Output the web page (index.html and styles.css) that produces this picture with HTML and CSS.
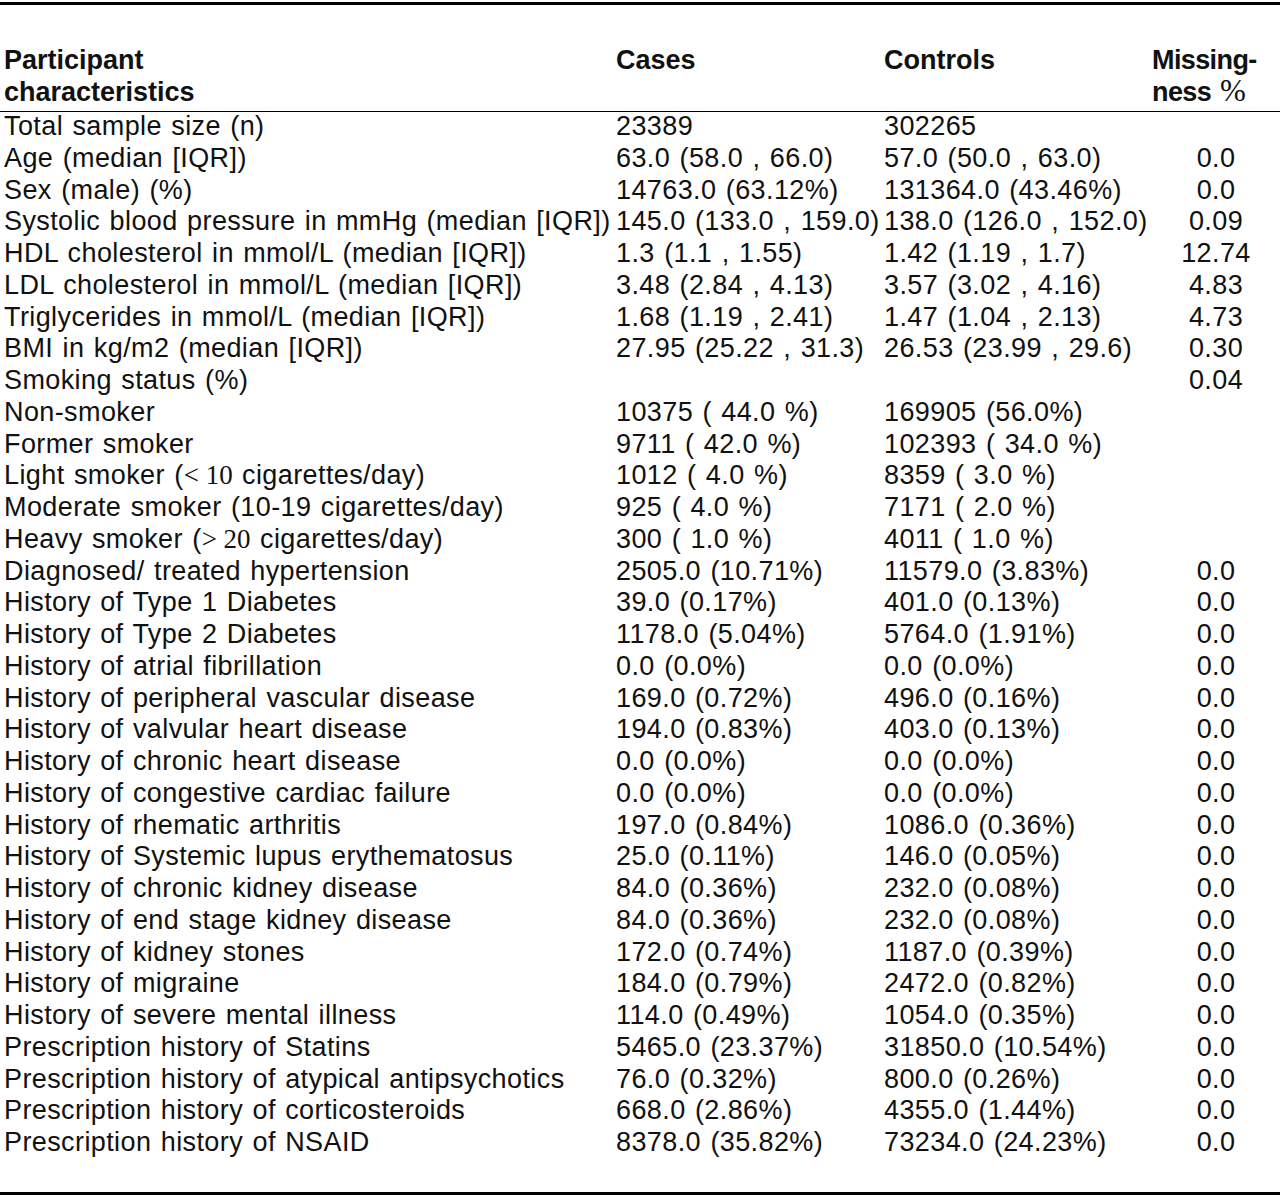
FILE: index.html
```html
<!DOCTYPE html>
<html lang="en">
<head>
<meta charset="utf-8">
<title>Participant characteristics</title>
<link rel="stylesheet" href="styles.css">
</head>
<body>
<div class="table-wrap">
<table class="tbl">
<colgroup>
<col class="c1"><col class="c2"><col class="c3"><col class="c4">
</colgroup>
<thead>
<tr>
<th class="lbl">Participant<br>characteristics</th>
<th>Cases</th>
<th>Controls</th>
<th class="misshead">Missing-<br>ness <span class="m pct">%</span></th>
</tr>
</thead>
<tbody>
<tr><td class="lbl">Total sample size (n)</td><td>23389</td><td>302265</td><td class="miss"></td></tr>
<tr><td class="lbl">Age (median [IQR])</td><td>63.0 (58.0 , 66.0)</td><td>57.0 (50.0 , 63.0)</td><td class="miss">0.0</td></tr>
<tr><td class="lbl">Sex (male) (%)</td><td>14763.0 (63.12%)</td><td>131364.0 (43.46%)</td><td class="miss">0.0</td></tr>
<tr><td class="lbl">Systolic blood pressure in mmHg (median [IQR])</td><td>145.0 (133.0 , 159.0)</td><td>138.0 (126.0 , 152.0)</td><td class="miss">0.09</td></tr>
<tr><td class="lbl">HDL cholesterol in mmol/L (median [IQR])</td><td>1.3 (1.1 , 1.55)</td><td>1.42 (1.19 , 1.7)</td><td class="miss">12.74</td></tr>
<tr><td class="lbl">LDL cholesterol in mmol/L (median [IQR])</td><td>3.48 (2.84 , 4.13)</td><td>3.57 (3.02 , 4.16)</td><td class="miss">4.83</td></tr>
<tr><td class="lbl">Triglycerides in mmol/L (median [IQR])</td><td>1.68 (1.19 , 2.41)</td><td>1.47 (1.04 , 2.13)</td><td class="miss">4.73</td></tr>
<tr><td class="lbl">BMI in kg/m2 (median [IQR])</td><td>27.95 (25.22 , 31.3)</td><td>26.53 (23.99 , 29.6)</td><td class="miss">0.30</td></tr>
<tr><td class="lbl">Smoking status (%)</td><td></td><td></td><td class="miss">0.04</td></tr>
<tr><td class="lbl">Non-smoker</td><td>10375 ( 44.0 %)</td><td>169905 (56.0%)</td><td class="miss"></td></tr>
<tr><td class="lbl">Former smoker</td><td>9711 ( 42.0 %)</td><td>102393 ( 34.0 %)</td><td class="miss"></td></tr>
<tr><td class="lbl">Light smoker (<span class="m">&lt;&nbsp;10</span> cigarettes/day)</td><td>1012 ( 4.0 %)</td><td>8359 ( 3.0 %)</td><td class="miss"></td></tr>
<tr><td class="lbl">Moderate smoker (10-19 cigarettes/day)</td><td>925 ( 4.0 %)</td><td>7171 ( 2.0 %)</td><td class="miss"></td></tr>
<tr><td class="lbl">Heavy smoker (<span class="m">&gt;&nbsp;20</span> cigarettes/day)</td><td>300 ( 1.0 %)</td><td>4011 ( 1.0 %)</td><td class="miss"></td></tr>
<tr><td class="lbl">Diagnosed/ treated hypertension</td><td>2505.0 (10.71%)</td><td>11579.0 (3.83%)</td><td class="miss">0.0</td></tr>
<tr><td class="lbl">History of Type 1 Diabetes</td><td>39.0 (0.17%)</td><td>401.0 (0.13%)</td><td class="miss">0.0</td></tr>
<tr><td class="lbl">History of Type 2 Diabetes</td><td>1178.0 (5.04%)</td><td>5764.0 (1.91%)</td><td class="miss">0.0</td></tr>
<tr><td class="lbl">History of atrial fibrillation</td><td>0.0 (0.0%)</td><td>0.0 (0.0%)</td><td class="miss">0.0</td></tr>
<tr><td class="lbl">History of peripheral vascular disease</td><td>169.0 (0.72%)</td><td>496.0 (0.16%)</td><td class="miss">0.0</td></tr>
<tr><td class="lbl">History of valvular heart disease</td><td>194.0 (0.83%)</td><td>403.0 (0.13%)</td><td class="miss">0.0</td></tr>
<tr><td class="lbl">History of chronic heart disease</td><td>0.0 (0.0%)</td><td>0.0 (0.0%)</td><td class="miss">0.0</td></tr>
<tr><td class="lbl">History of congestive cardiac failure</td><td>0.0 (0.0%)</td><td>0.0 (0.0%)</td><td class="miss">0.0</td></tr>
<tr><td class="lbl">History of rhematic arthritis</td><td>197.0 (0.84%)</td><td>1086.0 (0.36%)</td><td class="miss">0.0</td></tr>
<tr><td class="lbl">History of Systemic lupus erythematosus</td><td>25.0 (0.11%)</td><td>146.0 (0.05%)</td><td class="miss">0.0</td></tr>
<tr><td class="lbl">History of chronic kidney disease</td><td>84.0 (0.36%)</td><td>232.0 (0.08%)</td><td class="miss">0.0</td></tr>
<tr><td class="lbl">History of end stage kidney disease</td><td>84.0 (0.36%)</td><td>232.0 (0.08%)</td><td class="miss">0.0</td></tr>
<tr><td class="lbl">History of kidney stones</td><td>172.0 (0.74%)</td><td>1187.0 (0.39%)</td><td class="miss">0.0</td></tr>
<tr><td class="lbl">History of migraine</td><td>184.0 (0.79%)</td><td>2472.0 (0.82%)</td><td class="miss">0.0</td></tr>
<tr><td class="lbl">History of severe mental illness</td><td>114.0 (0.49%)</td><td>1054.0 (0.35%)</td><td class="miss">0.0</td></tr>
<tr><td class="lbl">Prescription history of Statins</td><td>5465.0 (23.37%)</td><td>31850.0 (10.54%)</td><td class="miss">0.0</td></tr>
<tr><td class="lbl">Prescription history of atypical antipsychotics</td><td>76.0 (0.32%)</td><td>800.0 (0.26%)</td><td class="miss">0.0</td></tr>
<tr><td class="lbl">Prescription history of corticosteroids</td><td>668.0 (2.86%)</td><td>4355.0 (1.44%)</td><td class="miss">0.0</td></tr>
<tr><td class="lbl">Prescription history of NSAID</td><td>8378.0 (35.82%)</td><td>73234.0 (24.23%)</td><td class="miss">0.0</td></tr>
</tbody>
</table>
</div>
</body>
</html>
```

FILE: styles.css
```css
html, body {
  margin: 0;
  padding: 0;
  background: #fff;
}

body {
  width: 1280px;
  font-family: "Liberation Sans", Arial, sans-serif;
  font-size: 27px;
  color: #111;
}

.table-wrap {
  margin-top: 2px;
  border-top: 3px solid #000;
  border-bottom: 3px solid #000;
  padding-top: 39px;
  padding-bottom: 32px;
}

.tbl {
  width: 1280px;
  table-layout: fixed;
  border-collapse: separate;
  border-spacing: 0;
}

.c1 { width: 616px; }
.c2 { width: 268px; }
.c3 { width: 268px; }
.c4 { width: 128px; }

.tbl th {
  font-weight: bold;
  text-align: left;
  vertical-align: top;
  line-height: 32px;
  height: 64px;
  padding: 0 0 3px 0;
  border-bottom: 1px solid #000;
  white-space: nowrap;
}

.tbl th.misshead {
  letter-spacing: -0.6px;
}

.tbl td {
  vertical-align: top;
  line-height: 28px;
  height: 28px;
  padding: 0 0 3.75px 0;
  white-space: nowrap;
  text-align: left;
  letter-spacing: 0.4px;
  word-spacing: 1.5px;
}

.tbl .lbl {
  padding-left: 4px;
}

.tbl td.miss {
  text-align: center;
}

.m {
  font-family: "Liberation Serif", "Times New Roman", serif;
  font-weight: normal;
  word-spacing: 0;
  letter-spacing: 0;
}

.pct {
  font-size: 31px;
  line-height: 0;
  margin-left: 2px;
}
```
